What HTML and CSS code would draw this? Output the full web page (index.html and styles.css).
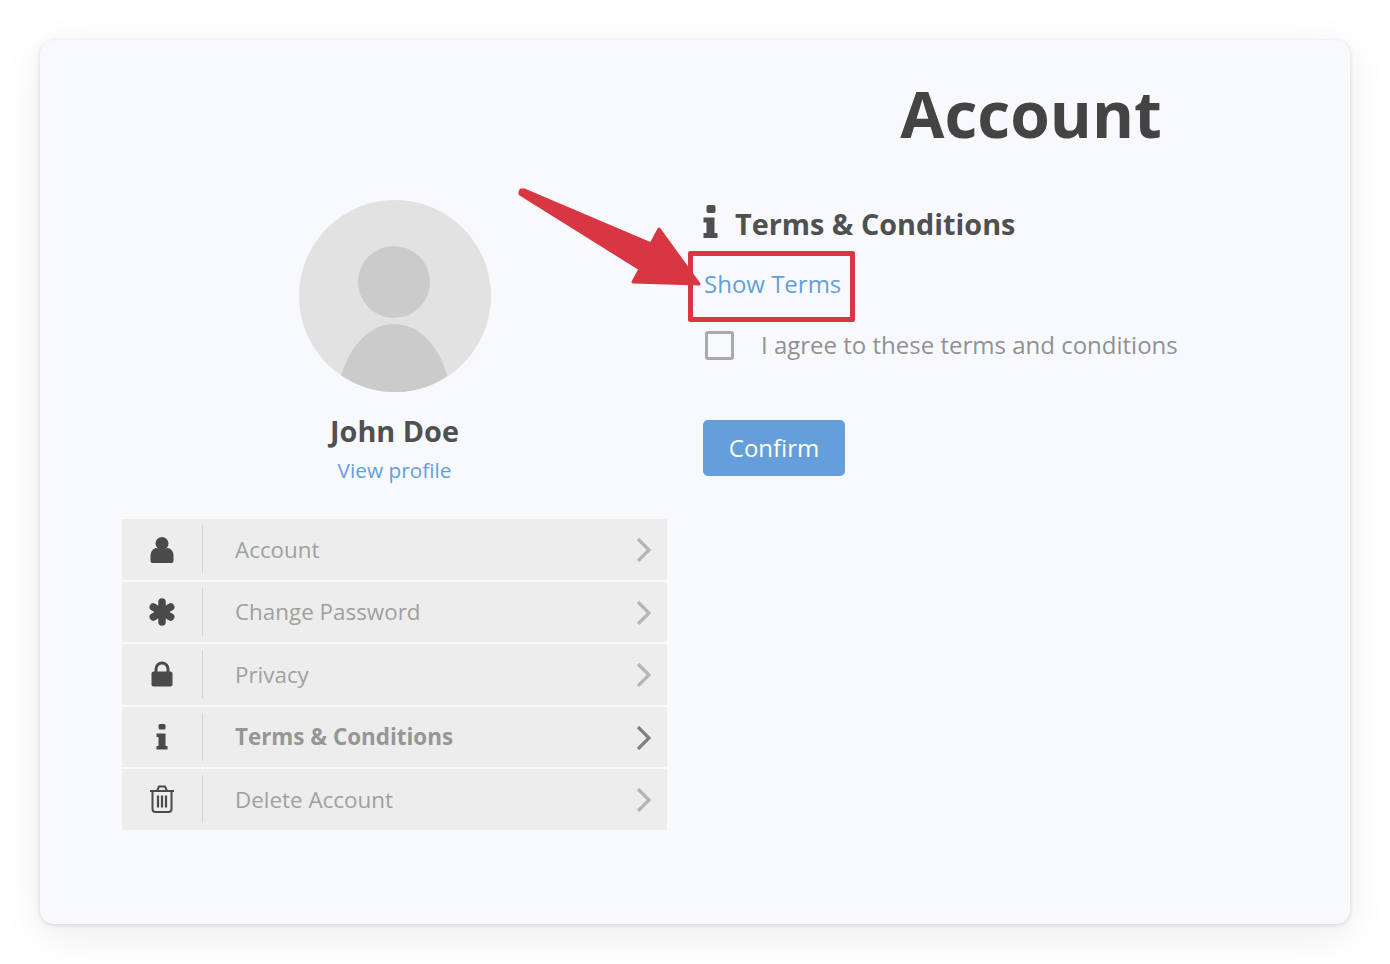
FILE: index.html
```html
<!DOCTYPE html>
<html lang="en">
<head>
  <meta charset="UTF-8">
  <meta name="viewport" content="width=device-width, initial-scale=1.0">
  <title>Account</title>
  <link rel="stylesheet" href="styles.css">
</head>

<body>
  <main class="card">
    <aside class="sidebar">
      <svg class="avatar" viewBox="0 0 192 192" width="192" height="192">
        <defs>
          <clipPath id="avatar-clip"><circle cx="96" cy="96" r="96"/></clipPath>
        </defs>
        <circle cx="96" cy="96" r="96" fill="#e2e2e2"/>
        <g clip-path="url(#avatar-clip)" fill="#cbcbcb">
          <circle cx="95" cy="82" r="36"/>
          <path d="M42 176C52 143 72 124 95 124C119 124 139 143 149 178V200H42Z"/>
        </g>
      </svg>
      <div class="user-name">John Doe</div>
      <a class="link user-link">View profile</a>

      <ul class="menu">
        <li class="menu-item">
          <span class="menu-icon">
            <svg viewBox="0 -1 24 28" width="24" height="28"><circle cx="12" cy="7.500" r="6.500" fill="#4a4a4a"/><path d="M0.500 20C0.500 14.500 4 12 7 12C9 13.600 15 13.600 17 12C20 12 23.500 14.500 23.500 20V24.500C23.500 26.500 22 27.500 20.500 27.500H3.500C2 27.500 0.500 26.500 0.500 24.500Z" fill="#4a4a4a"/></svg>
          </span>
          <span class="menu-label">Account</span>
          <svg class="chevron" viewBox="0 -1 16 26" width="16" height="26"><path d="M2 2L13 13L2 24" fill="none" stroke="#b5b5b5" stroke-width="3.200"/></svg>
        </li>
        <li class="menu-item">
          <span class="menu-icon">
            <svg viewBox="0 0 28 28" width="28" height="28"><g stroke="#4a4a4a" stroke-width="7.500" stroke-linecap="round"><path d="M14 4V24"/><path d="M5.300 9L22.700 19"/><path d="M5.300 19L22.700 9"/></g></svg>
          </span>
          <span class="menu-label">Change Password</span>
          <svg class="chevron" viewBox="0 -1 16 26" width="16" height="26"><path d="M2 2L13 13L2 24" fill="none" stroke="#b5b5b5" stroke-width="3.200"/></svg>
        </li>
        <li class="menu-item">
          <span class="menu-icon">
            <svg viewBox="0 0 22 26" width="22" height="26"><path d="M5 11V8A6 6 0 0 1 17 8V11" fill="none" stroke="#4a4a4a" stroke-width="3"/><rect x="0.500" y="10.500" width="21" height="15" rx="2" fill="#4a4a4a"/></svg>
          </span>
          <span class="menu-label">Privacy</span>
          <svg class="chevron" viewBox="0 -1 16 26" width="16" height="26"><path d="M2 2L13 13L2 24" fill="none" stroke="#b5b5b5" stroke-width="3.200"/></svg>
        </li>
        <li class="menu-item menu-item-active">
          <span class="menu-icon">
            <svg viewBox="0 0 12 26" width="12" height="26"><rect x="2.500" y="0" width="7" height="5.500" rx="1.500" fill="#4a4a4a"/><path d="M0.500 9.500H9.500V22H11.500V25.500H0.500V22H2.500V13H0.500Z" fill="#4a4a4a"/></svg>
          </span>
          <span class="menu-label">Terms &amp; Conditions</span>
          <svg class="chevron" viewBox="0 -1 16 26" width="16" height="26"><path d="M2 2L13 13L2 24" fill="none" stroke="#808080" stroke-width="3.200"/></svg>
        </li>
        <li class="menu-item">
          <span class="menu-icon">
            <svg viewBox="0 0 26 28" width="26" height="28"><g fill="none" stroke="#4a4a4a" stroke-width="2"><path d="M1 6H25"/><path d="M8 6L10 1.500H16L18 6"/><path d="M3.500 6V24C3.500 26 4.500 27 6.500 27H19.500C21.500 27 22.500 26 22.500 24V6"/><path d="M9 10.500V22.500M13 10.500V22.500M17 10.500V22.500" stroke-width="2.200"/></g></svg>
          </span>
          <span class="menu-label">Delete Account</span>
          <svg class="chevron" viewBox="0 -1 16 26" width="16" height="26"><path d="M2 2L13 13L2 24" fill="none" stroke="#b5b5b5" stroke-width="3.200"/></svg>
        </li>
      </ul>
    </aside>

    <section class="content">
      <h1 class="page-title">Account</h1>
      <h2 class="section-title">
        <svg class="section-icon" viewBox="0 0 15 33" width="15" height="33"><rect x="3.500" y="0" width="9" height="8" rx="2" fill="#4f4f4f"/><path d="M0.500 12.500H11.500V28H14.500V33H0.500V28H3.500V17.500H0.500Z" fill="#4f4f4f"/></svg>
        Terms &amp; Conditions
      </h2>
      <a class="link terms-link">Show Terms</a>
      <label class="agree">
        <span class="checkbox"></span>
        I agree to these terms and conditions
      </label>
      <button class="confirm">Confirm</button>
    </section>

    <!-- annotation drawn over the screenshot -->
    <div class="note-box"></div>
    <svg class="note-arrow" viewBox="0 0 200 110" width="200" height="110">
      <path d="M2 4L3 2L6 2L133 56L141 41L181 96L115 94L122 81L2 6Z" fill="#d93644" stroke="#d93644" stroke-width="3" stroke-linejoin="round"/>
    </svg>
  </main>
</body>
</html>
```

FILE: styles.css
```css
* {
  box-sizing: border-box;
}

body {
  margin: 0;
  padding: 40px;
  font-family: "Open Sans", Arial, sans-serif;
  background-color: #fff;
  color: #4a4a4a;
}

.card {
  position: relative;
  display: flex;
  height: 884px;
  padding-left: 82px;
  gap: 36px;
  background-color: #f8f9fd;
  border-radius: 14px;
  box-shadow: 0 1px 4px rgba(0,0,0,0.14), 0 10px 40px rgba(0,0,0,0.08);
}

.sidebar {
  width: 545px;
  flex-shrink: 0;
  padding-top: 160px;
  display: flex;
  flex-direction: column;
  align-items: center;
}

.avatar {
  display: block;
  margin-bottom: 18px;
}

.user-name {
  font-size: 28.8px;
  font-weight: 700;
  line-height: 41px;
  color: #505050;
}

.link {
  color: #649fdb;
  cursor: pointer;
}

.user-link {
  font-size: 20.8px;
  line-height: 38px;
  margin-bottom: 30px;
}

.menu {
  list-style: none;
  margin: 0;
  padding: 0;
  width: 100%;
  display: flex;
  flex-direction: column;
  gap: 2px;
}

.menu-item {
  display: flex;
  align-items: center;
  height: 60.55px;
  padding-right: 15px;
  background-color: #ededed;
  color: #a0a0a0;
  font-size: 22.4px;
}

.menu-icon {
  width: 81px;
  height: 48px;
  flex-shrink: 0;
  display: flex;
  align-items: center;
  justify-content: center;
  border-right: 1px solid #d4d4d4;
}

.menu-label {
  flex: 1;
  padding-left: 32px;
}

.menu-item-active .menu-label {
  font-weight: 700;
  color: #969696;
}

.content {
  flex: 1;
  display: flex;
  flex-direction: column;
  align-items: flex-start;
}

.page-title {
  margin: 26px 0 0;
  width: 100%;
  padding-left: 9px;
  text-align: center;
  font-size: 64px;
  line-height: 96px;
  font-weight: 700;
  color: #444;
}

.section-title {
  margin: 40px 0 0;
  display: flex;
  align-items: center;
  gap: 17px;
  font-size: 28.8px;
  line-height: 44px;
  font-weight: 700;
  color: #505050;
}

.section-icon {
  margin-bottom: 5px;
}

.terms-link {
  margin: 18px 0 0 1px;
  font-size: 24px;
  line-height: 40px;
}

.agree {
  margin: 21px 0 0 2px;
  display: flex;
  align-items: center;
  gap: 27px;
  font-size: 24px;
  line-height: 40px;
  color: #919191;
}

.checkbox {
  width: 29px;
  height: 29px;
  border: 3px solid #aaa;
  border-radius: 3px;
}

.confirm {
  margin-top: 55px;
  width: 142px;
  height: 56px;
  padding: 0 0 2px;
  border: none;
  border-radius: 5px;
  background-color: #649fdb;
  color: #fff;
  font-family: inherit;
  font-size: 24px;
  cursor: pointer;
}

.note-box {
  position: absolute;
  left: 648px;
  top: 211px;
  width: 167px;
  height: 71px;
  border: 5px solid #d93644;
  border-radius: 2px;
}

.note-arrow {
  position: absolute;
  left: 478px;
  top: 148px;
  overflow: visible;
}
```
